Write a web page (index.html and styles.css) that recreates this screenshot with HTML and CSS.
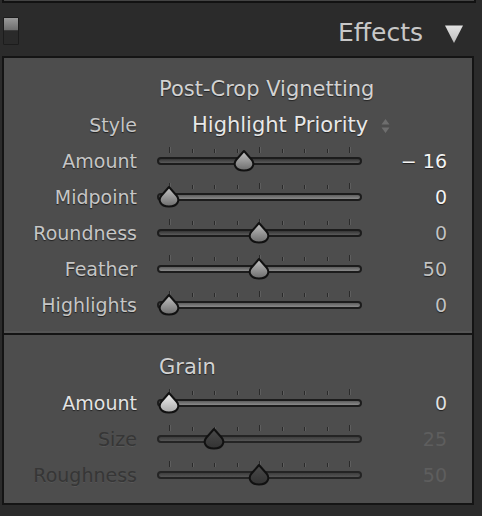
FILE: index.html
```html
<!DOCTYPE html>
<html>
<head>
<meta charset="utf-8">
<link rel="stylesheet" href="styles.css">
</head>
<body>
<div class="prev"></div>
<div class="header">
  <div class="switch"><div class="switch-top"></div><div class="switch-bot"></div></div>
  <div class="title">Effects</div>
  <svg class="disclose" width="20" height="20" viewBox="0 0 20 20"><defs><linearGradient id="tg" x1="0" y1="0" x2="0" y2="1"><stop offset="0" stop-color="#e2e2e2"/><stop offset="1" stop-color="#bdbdbd"/></linearGradient></defs><path d="M1 1.5 L19 1.5 L10 19 Z" fill="url(#tg)"/></svg>
</div>

<svg width="0" height="0" style="position:absolute">
  <defs>
    <linearGradient id="gN" x1="0" y1="0" x2="0" y2="1"><stop offset="0" stop-color="#c4c4c4"/><stop offset="1" stop-color="#6c6c6c"/></linearGradient>
    <linearGradient id="gA" x1="0" y1="0" x2="0" y2="1"><stop offset="0" stop-color="#f4f4f4"/><stop offset="1" stop-color="#a8a8a8"/></linearGradient>
    <linearGradient id="gD" x1="0" y1="0" x2="0" y2="1"><stop offset="0" stop-color="#4a4a4a"/><stop offset="1" stop-color="#333"/></linearGradient>
  </defs>
</svg>

<div class="panel first">
  <div class="sec-title">Post-Crop Vignetting</div>
  <div class="row">
    <div class="label">Style</div>
    <div class="select"><span class="sel-text">Highlight Priority</span>
      <svg class="updown" width="9" height="16" viewBox="0 0 9 16"><path d="M4.5 1 L8.5 6.5 L0.5 6.5 Z M4.5 15 L8.5 9.5 L0.5 9.5 Z" fill="#6e6e6e"/></svg>
    </div>
  </div>
  <div class="row">
    <div class="label">Amount</div>
    <div class="slider">
      <div class="ticks"><i class="tall"></i><i></i><i></i><i></i><i class="tall"></i><i></i><i></i><i></i><i class="tall"></i></div>
      <div class="track"></div>
      <svg class="thumb" style="left:75px" width="24" height="23" viewBox="0 0 24 23"><path d="M12 2 L19.5 10.5 C23 14.5 21.5 21.5 12 21.5 C2.5 21.5 1 14.5 4.5 10.5 Z" fill="url(#gN)" stroke="#111" stroke-width="2" stroke-linejoin="round"/></svg>
    </div>
    <div class="value bright">− 16</div>
  </div>
  <div class="row">
    <div class="label">Midpoint</div>
    <div class="slider">
      <div class="ticks"><i class="tall"></i><i></i><i></i><i></i><i class="tall"></i><i></i><i></i><i></i><i class="tall"></i></div>
      <div class="track light"></div>
      <svg class="thumb" style="left:0px" width="24" height="23" viewBox="0 0 24 23"><path d="M12 2 L19.5 10.5 C23 14.5 21.5 21.5 12 21.5 C2.5 21.5 1 14.5 4.5 10.5 Z" fill="url(#gN)" stroke="#111" stroke-width="2" stroke-linejoin="round"/></svg>
    </div>
    <div class="value bright">0</div>
  </div>
  <div class="row">
    <div class="label">Roundness</div>
    <div class="slider">
      <div class="ticks"><i class="tall"></i><i></i><i></i><i></i><i class="tall"></i><i></i><i></i><i></i><i class="tall"></i></div>
      <div class="track"></div>
      <svg class="thumb" style="left:90px" width="24" height="23" viewBox="0 0 24 23"><path d="M12 2 L19.5 10.5 C23 14.5 21.5 21.5 12 21.5 C2.5 21.5 1 14.5 4.5 10.5 Z" fill="url(#gN)" stroke="#111" stroke-width="2" stroke-linejoin="round"/></svg>
    </div>
    <div class="value">0</div>
  </div>
  <div class="row">
    <div class="label">Feather</div>
    <div class="slider">
      <div class="ticks"><i class="tall"></i><i></i><i></i><i></i><i class="tall"></i><i></i><i></i><i></i><i class="tall"></i></div>
      <div class="track light"></div>
      <svg class="thumb" style="left:90px" width="24" height="23" viewBox="0 0 24 23"><path d="M12 2 L19.5 10.5 C23 14.5 21.5 21.5 12 21.5 C2.5 21.5 1 14.5 4.5 10.5 Z" fill="url(#gN)" stroke="#111" stroke-width="2" stroke-linejoin="round"/></svg>
    </div>
    <div class="value">50</div>
  </div>
  <div class="row">
    <div class="label">Highlights</div>
    <div class="slider">
      <div class="ticks"><i class="tall"></i><i></i><i></i><i></i><i class="tall"></i><i></i><i></i><i></i><i class="tall"></i></div>
      <div class="track light"></div>
      <svg class="thumb" style="left:0px" width="24" height="23" viewBox="0 0 24 23"><path d="M12 2 L19.5 10.5 C23 14.5 21.5 21.5 12 21.5 C2.5 21.5 1 14.5 4.5 10.5 Z" fill="url(#gN)" stroke="#111" stroke-width="2" stroke-linejoin="round"/></svg>
    </div>
    <div class="value">0</div>
  </div>
</div>

<div class="panel second">
  <div class="sec-title">Grain</div>
  <div class="row">
    <div class="label active">Amount</div>
    <div class="slider">
      <div class="ticks"><i class="tall"></i><i></i><i></i><i></i><i class="tall"></i><i></i><i></i><i></i><i class="tall"></i></div>
      <div class="track light"></div>
      <svg class="thumb" style="left:0px" width="24" height="23" viewBox="0 0 24 23"><path d="M12 2 L19.5 10.5 C23 14.5 21.5 21.5 12 21.5 C2.5 21.5 1 14.5 4.5 10.5 Z" fill="url(#gA)" stroke="#111" stroke-width="2" stroke-linejoin="round"/></svg>
    </div>
    <div class="value active">0</div>
  </div>
  <div class="row">
    <div class="label dim">Size</div>
    <div class="slider">
      <div class="ticks"><i class="tall"></i><i></i><i></i><i></i><i class="tall"></i><i></i><i></i><i></i><i class="tall"></i></div>
      <div class="track dimtrack"></div>
      <svg class="thumb" style="left:45px" width="24" height="23" viewBox="0 0 24 23"><path d="M12 2 L19.5 10.5 C23 14.5 21.5 21.5 12 21.5 C2.5 21.5 1 14.5 4.5 10.5 Z" fill="url(#gD)" stroke="#111" stroke-width="2" stroke-linejoin="round"/></svg>
    </div>
    <div class="value dim">25</div>
  </div>
  <div class="row">
    <div class="label dim">Roughness</div>
    <div class="slider">
      <div class="ticks"><i class="tall"></i><i></i><i></i><i></i><i class="tall"></i><i></i><i></i><i></i><i class="tall"></i></div>
      <div class="track dimtrack"></div>
      <svg class="thumb" style="left:90px" width="24" height="23" viewBox="0 0 24 23"><path d="M12 2 L19.5 10.5 C23 14.5 21.5 21.5 12 21.5 C2.5 21.5 1 14.5 4.5 10.5 Z" fill="url(#gD)" stroke="#111" stroke-width="2" stroke-linejoin="round"/></svg>
    </div>
    <div class="value dim">50</div>
  </div>
</div>
</body>
</html>
```

FILE: styles.css
```css
html, body {
  margin: 0;
  padding: 0;
  background: #2b2b2b;
  font-family: "DejaVu Sans", "Open Sans", sans-serif;
  width: 482px;
  height: 516px;
  overflow: hidden;
}

.prev {
  width: 470px;
  height: 1px;
  margin-left: 2px;
  background: #444;
  border: 2px solid #121212;
  border-top: 0;
}

.header {
  height: 53px;
  display: flex;
  align-items: center;
}

.switch {
  margin-left: 3px;
  margin-top: 2px;
  width: 16px;
  height: 28px;
  display: flex;
  flex-direction: column;
  box-sizing: border-box;
  border: 1px solid #1c1c1c;
  border-radius: 1px;
}
.switch-top {
  height: 12px;
  background: linear-gradient(#9a9a9a, #6e6e6e);
}
.switch-bot {
  flex: 1;
  background: #2a2a2a;
  border-top: 1px solid #3a3a3a;
}

.title {
  margin-left: auto;
  font-size: 25px;
  color: #c8c8c8;
  padding-top: 5px;
}

.disclose {
  margin-left: 21px;
  margin-right: 18px;
  margin-top: 8px;
}

.panel {
  width: 468px;
  margin-left: 2px;
  background: #4d4d4d;
  border: 2px solid #141414;
}
.panel.first {
  padding-top: 13px;
  padding-bottom: 10px;
  box-shadow: inset 0 -2px 0 #555;
}
.panel.second {
  border-top: 0;
  padding-top: 14px;
  padding-bottom: 10px;
}

.sec-title {
  height: 36px;
  line-height: 36px;
  padding-left: 155px;
  font-size: 21px;
  color: #d2d2d2;
  text-shadow: 0 1px 1px rgba(0,0,0,0.55);
}

.row {
  height: 36px;
  display: flex;
  align-items: center;
}

.label {
  width: 133px;
  margin-right: 20px;
  text-align: right;
  font-size: 19px;
  color: #c6c6c6;
  text-shadow: 0 1px 1px rgba(0,0,0,0.6);
}
.label.active { color: #e4e4e4; }
.label.dim { color: #363636; text-shadow: 0 1px 0 rgba(255,255,255,0.06); }

.select {
  display: flex;
  align-items: center;
  padding-left: 35px;
}
.sel-text {
  font-size: 21px;
  color: #e8e8e8;
  text-shadow: 0 1px 1px rgba(0,0,0,0.55);
}
.updown {
  margin-left: 13px;
  margin-top: 2px;
}

.slider {
  width: 205px;
  height: 36px;
  position: relative;
}
.ticks {
  position: absolute;
  left: 12px;
  width: 181px;
  top: 3px;
  height: 7px;
  display: flex;
  justify-content: space-between;
  align-items: flex-end;
}
.ticks i {
  display: block;
  width: 1px;
  height: 4px;
  background: #2a2a2a;
  box-shadow: 1px 0 0 #5e5e5e;
}
.ticks i.tall { height: 6px; }

.track {
  position: absolute;
  left: 0;
  top: 14px;
  width: 205px;
  height: 8px;
  box-sizing: border-box;
  border: 2px solid #1c1c1c;
  border-radius: 4px;
  background: linear-gradient(#363636, #5a5a5a);
}
.track.light {
  background: linear-gradient(#5e5e5e, #8a8a8a);
}
.track.dimtrack {
  background: linear-gradient(#3e3e3e, #555);
  border-color: #242424;
}

.thumb {
  position: absolute;
  top: 6px;
}

.value {
  width: 85px;
  text-align: right;
  font-size: 19px;
  color: #c2c2c2;
  text-shadow: 0 1px 1px rgba(0,0,0,0.6);
}
.value.bright { color: #f4f4f4; }
.value.active { color: #e0e0e0; }
.value.dim { color: #5e5e5e; text-shadow: none; }
```
